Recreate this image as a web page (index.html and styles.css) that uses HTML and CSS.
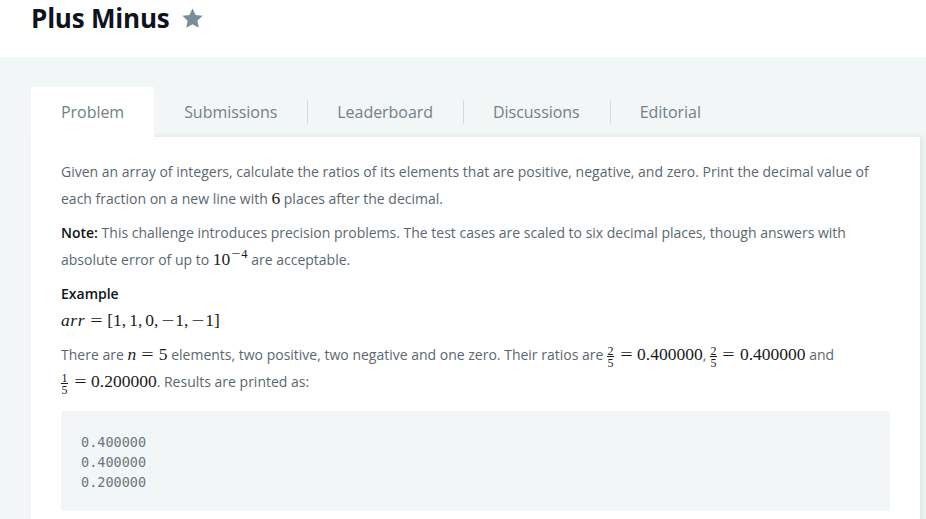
FILE: index.html
```html
<!DOCTYPE html>
<html lang="en">
<head>
<meta charset="utf-8">
<title>Plus Minus</title>
<link rel="stylesheet" href="styles.css">
</head>
<body>
<header class="header">
  <h1 class="title">Plus Minus</h1>
  <svg class="star" viewBox="0 0 24 24" width="23" height="23" aria-hidden="true"><path d="M12 1.5l3.2 6.8 7.3.9-5.4 5.1 1.4 7.3L12 18l-6.5 3.6 1.4-7.3-5.4-5.1 7.3-.9z" fill="#738f99"/></svg>
</header>
<main class="page">
  <nav class="tabs">
    <a class="tab active">Problem</a>
    <a class="tab">Submissions</a>
    <a class="tab sep">Leaderboard</a>
    <a class="tab sep">Discussions</a>
    <a class="tab sep">Editorial</a>
  </nav>
  <section class="card">
    <p>Given an array of integers, calculate the ratios of its elements that are positive, negative, and zero. Print the decimal value of each fraction on a new line with <span class="m">6</span> places after the decimal.</p>
    <p><strong>Note:</strong> This challenge introduces precision problems. The test cases are scaled to six decimal places, though answers with absolute error of up to <span class="m">10<sup><span class="neg">−</span>4</sup></span> are acceptable.</p>
    <p class="heading"><strong>Example</strong></p>
    <p class="mathline"><span class="m"><i>arr</i><span class="op rel">=</span>[1,<span class="thin"></span>1,<span class="thin"></span>0,<span class="thin"></span><span class="neg">−</span>1,<span class="thin"></span><span class="neg">−</span>1]</span></p>
    <p>There are <span class="m"><i>n</i><span class="op rel">=</span>5</span> elements, two positive, two negative and one zero. Their ratios are <span class="m"><span class="frac"><span>2</span><span class="den">5</span></span><span class="op rel">=</span>0.400000</span>, <span class="m"><span class="frac"><span>2</span><span class="den">5</span></span><span class="op rel">=</span>0.400000</span> and <span class="m"><span class="frac"><span>1</span><span class="den">5</span></span><span class="op rel">=</span>0.200000</span>. Results are printed as:</p>
    <pre class="code">0.400000
0.400000
0.200000</pre>
  </section>
</main>
</body>
</html>
```
FILE: styles.css
```css
html, body { margin: 0; padding: 0; }
body {
  background: #f3f6f7;
  font-family: "Open Sans", "Noto Sans", sans-serif;
  height: 519px;
  overflow: hidden;
}
.header {
  background: #fff;
  height: 57px;
  display: flex;
  align-items: flex-start;
  padding-left: 31px;
  box-sizing: border-box;
}
.title {
  margin: 0;
  font-size: 26px;
  font-weight: 700;
  color: #0e141e;
  line-height: 36px;
  letter-spacing: -0.2px;
}
.star { margin: 7px 0 0 11px; }
.page { padding: 30px 6px 0 31px; }
.tabs { display: flex; height: 50px; align-items: center; }
.tab {
  font-size: 16px;
  color: #738086;
  padding: 0 30px;
  line-height: 24px;
  height: 50px;
  display: flex;
  align-items: center;
  position: relative;
  letter-spacing: -0.04px;
}
.tab.active { background: #fff; }
.tab.sep::before {
  content: "";
  position: absolute;
  left: 0; top: 13px;
  width: 1px; height: 24px;
  background: #d3d9dc;
}
.card {
  background: #fff;
  padding: 21px 30px 20px 30px;
  box-shadow: 3px 0 6px rgba(0,0,0,0.08);
  color: #5b6770;
  font-size: 14px;
  line-height: 27px;
}
.card p { margin: 0 0 7px; }
.card strong { color: #0e141e; font-weight: 600; }
.card .heading { margin-bottom: 0; }
.m {
  font-family: "Liberation Serif", "DejaVu Serif", serif;
  font-size: 17.5px;
  color: #1a1a1a;
  white-space: nowrap;
}
.m i { font-style: italic; letter-spacing: 0.6px; }
.op { display: inline-block; width: 0.74em; text-align: center; }
.op.rel { margin: 0 0.26em; transform: scaleX(1.25); }
.neg { display: inline-block; transform: scaleX(1.3); margin: 0 2px 0 2px; }
.thin { display: inline-block; width: 0.17em; }
.m sup { font-size: 12.5px; vertical-align: 7px; line-height: 0; }
.frac {
  display: inline-flex;
  flex-direction: column;
  align-items: center;
  font-size: 12px;
  line-height: 8px;
  vertical-align: 5px;
  margin: 0 1px 0 0;
}
.frac .den { border-top: 1px solid #1a1a1a; padding-top: 2px; margin-top: 1px; min-width: 7px; text-align: center; }
.code {
  margin: 16px 0 0;
  background: #f3f6f7;
  padding: 21px 20px 19px;
  font-family: "DejaVu Sans Mono", "Liberation Mono", monospace;
  font-size: 13.5px;
  line-height: 20px;
  color: #6b767c;
}
```
